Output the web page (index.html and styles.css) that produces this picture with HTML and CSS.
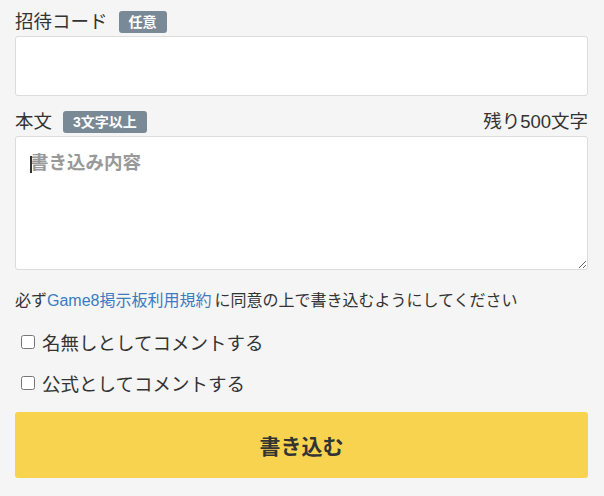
FILE: index.html
```html
<!DOCTYPE html>
<html lang="ja">
<head>
<meta charset="utf-8">
<link rel="stylesheet" href="styles.css">
</head>
<body>
<form class="form">
  <div class="label-row">
    <span class="label">招待コード</span>
    <span class="badge">任意</span>
  </div>
  <input class="field" type="text">

  <div class="label-row second">
    <span class="label">本文</span>
    <span class="badge">3文字以上</span>
    <span class="counter">残り500文字</span>
  </div>
  <div class="area-wrap">
    <textarea class="area" placeholder="書き込み内容"></textarea>
    <span class="caret"></span>
  </div>

  <p class="note">必ず<a class="link" href="#">Game8掲示板利用規約</a>に同意の上で書き込むようにしてください</p>

  <label class="check"><input type="checkbox" class="box"><span>名無しとしてコメントする</span></label>
  <label class="check check-2"><input type="checkbox" class="box"><span>公式としてコメントする</span></label>

  <button type="button" class="submit">書き込む</button>
</form>
</body>
</html>
```

FILE: styles.css
```css
* { box-sizing: border-box; }
html, body { margin: 0; padding: 0; background: #f5f5f5; }
body {
  font-family: "Liberation Sans", "Noto Sans CJK JP", sans-serif;
  color: #333;
}
.form {
  display: flex;
  flex-direction: column;
  padding: 11px 16px 0 15px;
}
.label-row {
  display: flex;
  align-items: center;
  height: 22px;
  margin-bottom: 3px;
}
.label-row.second { margin-top: 15px; }
.label {
  font-size: 18.5px;
  line-height: 22px;
  margin-right: 11px;
}
.badge {
  background: #7a8996;
  color: #fff;
  font-size: 14px;
  font-weight: bold;
  line-height: 22px;
  height: 22px;
  padding: 0 10px;
  border-radius: 3px;
}
.counter {
  margin-left: auto;
  font-size: 18.5px;
  line-height: 22px;
}
.field {
  display: block;
  width: 100%;
  height: 60px;
  background: #fff;
  border: 1px solid #dcdcdc;
  border-radius: 3px;
  font: inherit;
  outline: none;
}
.area-wrap { position: relative; }
.area {
  display: block;
  width: 100%;
  height: 134px;
  background: #fff;
  border: 1px solid #dcdcdc;
  border-radius: 3px;
  padding: 12px 14px;
  font-family: inherit;
  font-size: 18.5px;
  line-height: 27px;
  outline: none;
  resize: vertical;
}
.area::placeholder {
  color: #999;
  font-weight: bold;
}
.caret {
  position: absolute;
  left: 15px;
  top: 20px;
  width: 2px;
  height: 17px;
  background: #333;
}
.note {
  margin: 19px 0 0;
  font-size: 16px;
  line-height: 24px;
}
.link { color: #3b7bbf; text-decoration: none; margin-right: 3px; }
.check {
  display: flex;
  align-items: center;
  height: 30px;
  margin-top: 14px;
  font-size: 18.5px;
}
.check-2 { margin-top: 11px; }
.box {
  width: 14px;
  height: 14px;
  margin: 0 7px 0 6px;
}
.submit {
  margin-top: 14px;
  height: 66px;
  width: 100%;
  border: none;
  border-radius: 3px;
  background: #f8d350;
  color: #333;
  font-family: inherit;
  font-size: 21px;
  font-weight: bold;
}
```
